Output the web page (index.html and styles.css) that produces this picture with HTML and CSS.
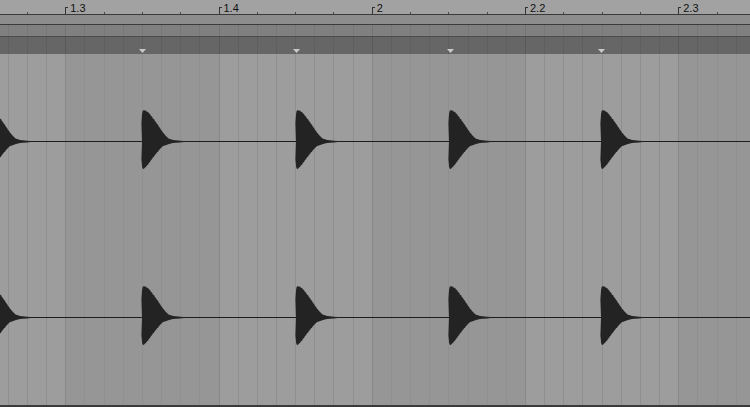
FILE: index.html
```html
<!DOCTYPE html>
<html>
<head>
<meta charset="utf-8">
<link rel="stylesheet" href="styles.css">
</head>
<body>
<div class="editor">
  <div class="ruler">
    <div class="ruler-grid">
      <div class="rbeat"><div class="q"></div><div class="q"></div><div class="q"></div><div class="q"></div></div>
      <div class="rbeat"><div class="q label"><span>1.3</span></div><div class="q"></div><div class="q"></div><div class="q"></div></div>
      <div class="rbeat"><div class="q label"><span>1.4</span></div><div class="q"></div><div class="q"></div><div class="q"></div></div>
      <div class="rbeat"><div class="q label"><span>2</span></div><div class="q"></div><div class="q"></div><div class="q"></div></div>
      <div class="rbeat"><div class="q label"><span>2.2</span></div><div class="q"></div><div class="q"></div><div class="q"></div></div>
      <div class="rbeat"><div class="q label"><span>2.3</span></div><div class="q"></div><div class="q"></div><div class="q"></div></div>
    </div>
  </div>
  <div class="band band1"></div>
  <div class="band band2">
    <div class="grid">
      <div class="beat"><div class="sub"></div><div class="sub"></div><div class="sub"></div><div class="sub"></div><div class="sub"></div><div class="sub"></div><div class="sub"></div><div class="sub"></div></div>
      <div class="beat"><div class="sub"></div><div class="sub"></div><div class="sub"></div><div class="sub"></div><div class="sub"></div><div class="sub"></div><div class="sub"></div><div class="sub"></div></div>
      <div class="beat"><div class="sub"></div><div class="sub"></div><div class="sub"></div><div class="sub"></div><div class="sub"></div><div class="sub"></div><div class="sub"></div><div class="sub"></div></div>
      <div class="beat"><div class="sub"></div><div class="sub"></div><div class="sub"></div><div class="sub"></div><div class="sub"></div><div class="sub"></div><div class="sub"></div><div class="sub"></div></div>
      <div class="beat"><div class="sub"></div><div class="sub"></div><div class="sub"></div><div class="sub"></div><div class="sub"></div><div class="sub"></div><div class="sub"></div><div class="sub"></div></div>
      <div class="beat"><div class="sub"></div><div class="sub"></div><div class="sub"></div><div class="sub"></div><div class="sub"></div><div class="sub"></div><div class="sub"></div><div class="sub"></div></div>
    </div>
  </div>
  <div class="band band3">
    <div class="grid">
      <div class="beat"><div class="sub"></div><div class="sub"></div><div class="sub"></div><div class="sub"></div><div class="sub"></div><div class="sub"></div><div class="sub"></div><div class="sub"></div></div>
      <div class="beat"><div class="sub"></div><div class="sub"></div><div class="sub"></div><div class="sub"></div><div class="sub"></div><div class="sub"></div><div class="sub"></div><div class="sub"></div></div>
      <div class="beat"><div class="sub"></div><div class="sub"></div><div class="sub"></div><div class="sub"></div><div class="sub"></div><div class="sub"></div><div class="sub"></div><div class="sub"></div></div>
      <div class="beat"><div class="sub"></div><div class="sub"></div><div class="sub"></div><div class="sub"></div><div class="sub"></div><div class="sub"></div><div class="sub"></div><div class="sub"></div></div>
      <div class="beat"><div class="sub"></div><div class="sub"></div><div class="sub"></div><div class="sub"></div><div class="sub"></div><div class="sub"></div><div class="sub"></div><div class="sub"></div></div>
      <div class="beat"><div class="sub"></div><div class="sub"></div><div class="sub"></div><div class="sub"></div><div class="sub"></div><div class="sub"></div><div class="sub"></div><div class="sub"></div></div>
    </div>
    <svg class="marker m1" width="7" height="4" viewBox="0 0 7 4"><polygon points="0,0 7,0 3.5,4"/></svg>
    <svg class="marker m2" width="7" height="4" viewBox="0 0 7 4"><polygon points="0,0 7,0 3.5,4"/></svg>
    <svg class="marker m3" width="7" height="4" viewBox="0 0 7 4"><polygon points="0,0 7,0 3.5,4"/></svg>
    <svg class="marker m4" width="7" height="4" viewBox="0 0 7 4"><polygon points="0,0 7,0 3.5,4"/></svg>
  </div>
  <div class="wave">
    <div class="grid">
      <div class="beat"><div class="sub"></div><div class="sub"></div><div class="sub"></div><div class="sub"></div><div class="sub"></div><div class="sub"></div><div class="sub"></div><div class="sub"></div></div>
      <div class="beat dark"><div class="sub"></div><div class="sub"></div><div class="sub"></div><div class="sub"></div><div class="sub"></div><div class="sub"></div><div class="sub"></div><div class="sub"></div></div>
      <div class="beat"><div class="sub"></div><div class="sub"></div><div class="sub"></div><div class="sub"></div><div class="sub"></div><div class="sub"></div><div class="sub"></div><div class="sub"></div></div>
      <div class="beat dark"><div class="sub"></div><div class="sub"></div><div class="sub"></div><div class="sub"></div><div class="sub"></div><div class="sub"></div><div class="sub"></div><div class="sub"></div></div>
      <div class="beat"><div class="sub"></div><div class="sub"></div><div class="sub"></div><div class="sub"></div><div class="sub"></div><div class="sub"></div><div class="sub"></div><div class="sub"></div></div>
      <div class="beat dark"><div class="sub"></div><div class="sub"></div><div class="sub"></div><div class="sub"></div><div class="sub"></div><div class="sub"></div><div class="sub"></div><div class="sub"></div></div>
    </div>
    <svg class="wave-svg" width="750" height="351" viewBox="0 0 750 351">
      <defs>
        <path id="hit" d="M0,0 L-0.6,-18 L0,-27 L0.6,-30.5 L2,-31.5 L3,-30.8 L4,-31 L5,-29.6 L6,-29.8 L7,-28 L8,-27.6 L9,-25.4 L10,-25 L11,-22.8 L12,-22.4 L13,-20.2 L14,-19.6 L15,-17.4 L16,-16.8 L17,-14.6 L18,-13.8 L19,-11.6 L20,-10.8 L21,-8.8 L22,-8 L23,-6.4 L24,-5.6 L25,-4.4 L26,-3.6 L27,-2.8 L29,-2.2 L31,-1.6 L34,-1.2 L38,-0.8 L42,-0.6 L42,0.6 L38,0.9 L34,1.2 L31,1.6 L29,2 L27,2.6 L25,3.2 L23,4 L21,4.6 L20,5.8 L19,6.2 L18,7.8 L17,8.4 L16,10.2 L15,10.8 L14,12.6 L13,13.2 L12,15.2 L11,15.8 L10,17.8 L9,18.4 L8,20.6 L7,21.2 L6,23.2 L5,23.8 L4,25.6 L3,26 L2,27.2 L1,27.4 L0.2,26 L-0.6,18 Z"/>
      </defs>
      <rect class="center" x="0" y="87" width="750" height="1"/>
      <rect class="center" x="0" y="263" width="750" height="1"/>
      <use href="#hit" x="-11" y="87.5"/>
      <use href="#hit" x="142" y="87.5"/>
      <use href="#hit" x="296" y="87.5"/>
      <use href="#hit" x="449" y="87.5"/>
      <use href="#hit" x="601" y="87.5"/>
      <use href="#hit" x="-11" y="263.5"/>
      <use href="#hit" x="142" y="263.5"/>
      <use href="#hit" x="296" y="263.5"/>
      <use href="#hit" x="449" y="263.5"/>
      <use href="#hit" x="601" y="263.5"/>
    </svg>
  </div>
  <div class="footer"></div>
</div>
</body>
</html>
```

FILE: styles.css
```css
html, body {
  margin: 0;
  padding: 0;
  width: 750px;
  height: 407px;
  overflow: hidden;
  background: #9c9c9c;
}

.editor {
  display: flex;
  flex-direction: column;
  width: 750px;
  height: 407px;
  overflow: hidden;
  font-family: "Liberation Sans", Arial, sans-serif;
}

/* Ruler */
.ruler {
  flex: 0 0 14px;
  height: 14px;
  background: #a2a2a2;
  border-bottom: 1px solid #3a3a3a;
  overflow: hidden;
}

.ruler-grid {
  display: flex;
  height: 14px;
  margin-left: -88px;
}

.rbeat {
  flex: 0 0 153.25px;
  display: flex;
}

.q {
  flex: 1;
  position: relative;
}

.q::before {
  content: "";
  position: absolute;
  left: 0;
  bottom: 0;
  width: 1px;
  height: 2px;
  background: #4a4a4a;
}

.q.label::before {
  top: 7px;
  height: 7px;
  background: #333;
}

.q.label::after {
  content: "";
  position: absolute;
  left: 0;
  top: 7px;
  width: 3px;
  height: 1px;
  background: #333;
}

.q.label span {
  display: block;
  padding: 2px 0 0 5px;
  font-size: 11px;
  line-height: 12px;
  color: #111111;
  white-space: nowrap;
}

/* Bands */
.band {
  overflow: hidden;
  position: relative;
}

.band1 {
  flex: 0 0 9px;
  background: #8d8d8d;
  border-bottom: 1px solid #3c3c3c;
}

.band2 {
  flex: 0 0 11px;
  background: #808080;
  border-bottom: 1px solid #4c4c4c;
  --line: #777777;
  --beatline: #727272;
}

.band3 {
  flex: 0 0 17px;
  background: #666666;
  --line: #5f5f5f;
  --beatline: #595959;
}

.grid {
  display: flex;
  height: 100%;
  margin-left: -88px;
}

.beat {
  flex: 0 0 153.25px;
  display: flex;
}

.sub {
  flex: 1;
  border-left: 1px solid var(--line);
}

.sub:first-child {
  border-left-color: var(--beatline);
}

.marker {
  position: absolute;
  top: 12px;
  display: block;
}

.marker polygon {
  fill: #c9c9c9;
}

.m1 { left: 139px; }
.m2 { left: 293px; }
.m3 { left: 447px; }
.m4 { left: 598px; }

/* Waveform area */
.wave {
  flex: 1;
  position: relative;
  overflow: hidden;
  background: #9d9d9d;
  --line: #8f8f8f;
  --beatline: #888888;
}

.wave .beat {
  background: #9d9d9d;
}

.wave .beat.dark {
  background: #969696;
}

.wave-svg {
  position: absolute;
  left: 0;
  top: 0;
}

.wave-svg .center {
  fill: #1c1c1c;
  shape-rendering: crispEdges;
}

.wave-svg use {
  fill: #232323;
}

.footer {
  flex: 0 0 2px;
  background: #3a3a3a;
}
```
